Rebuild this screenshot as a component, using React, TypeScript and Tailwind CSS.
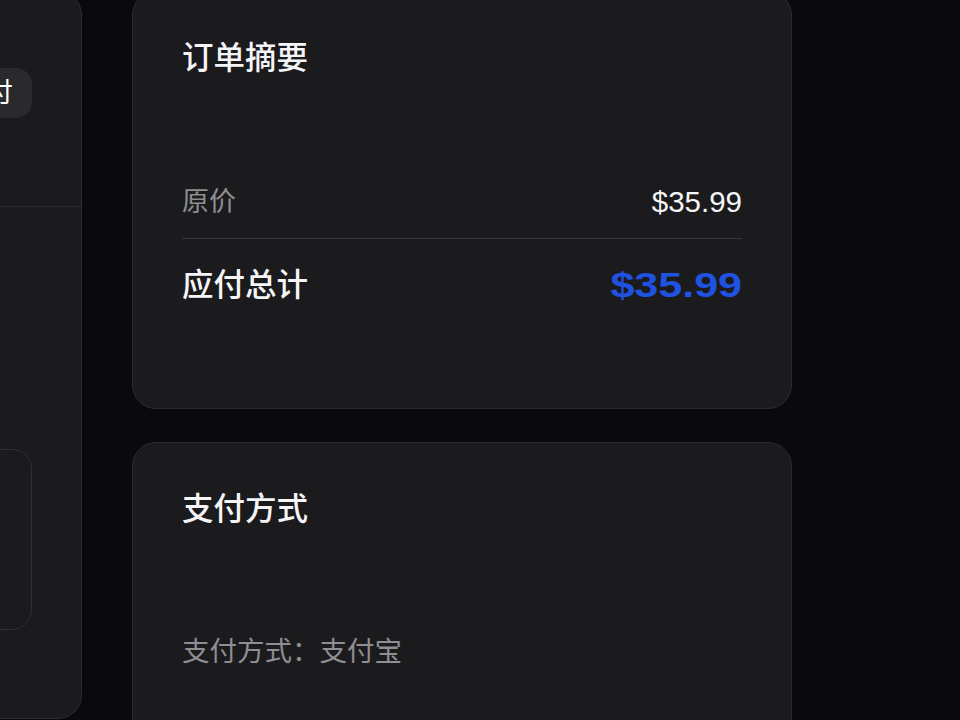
import React from "react";

const cjk = { fontFamily: '"Liberation Sans", "Noto Sans CJK SC", sans-serif' };

export default function App() {
  return (
    <div
      className="w-[960px] h-[720px] overflow-hidden bg-[#0a0a0c] text-[#f5f5f7]"
      style={cjk}
    >
      <div className="flex items-start gap-[50px] -mt-[9px] -ml-[218px]">
        {/* Left card (mostly off-screen) */}
        <div className="w-[300px] shrink-0 rounded-[24px] border border-[#2c2c30] bg-[#1b1b1e]">
          <div className="flex items-center justify-between border-b border-[#2c2c30] pl-[49px] pr-[49px] pt-[76px] pb-[88px]">
            <span className="text-[31px] font-medium leading-[34px]">订单</span>
            <span className="flex h-[50px] items-center rounded-[16px] bg-[#2a2a2d] px-[19px] text-[27px] leading-[30px] text-white">
              已支付
            </span>
          </div>
          <div className="px-[49px] pt-[242px] pb-[88px]">
            <div className="h-[181px] rounded-[20px] border border-[#303034]" />
          </div>
        </div>

        {/* Right column */}
        <div className="flex w-[660px] shrink-0 flex-col gap-[33px]">
          <div className="rounded-[24px] border border-[#2c2c30] bg-[#1b1b1e] px-[49px] pt-[49px] pb-[103px]">
            <h2 className="text-[31.5px] font-medium leading-[34px] text-[#f5f5f7]">订单摘要</h2>
            <div className="mt-[112px] flex items-center justify-between border-b border-[#38383c] pb-[21px]">
              <span className="text-[27px] leading-[30px] text-[#8e8e93]">原价</span>
              <span className="text-[29.5px] leading-[30px] text-[#f5f5f7]">$35.99</span>
            </div>
            <div className="flex items-center justify-between pt-[26px]">
              <span className="text-[31.5px] font-medium leading-[40px] text-[#f5f5f7]">应付总计</span>
              <span className="inline-block origin-right scale-x-[1.23] text-[35px] font-bold leading-[40px] text-[#1f52e0]">
                $35.99
              </span>
            </div>
          </div>

          <div className="rounded-[24px] border border-[#2c2c30] bg-[#1b1b1e] px-[49px] pt-[49px] pb-[100px]">
            <h2 className="text-[31.5px] font-medium leading-[34px] text-[#f5f5f7]">支付方式</h2>
            <p className="mt-[111px] text-[27.5px] leading-[30px] text-[#8e8e93]">支付方式：支付宝</p>
          </div>
        </div>
      </div>
    </div>
  );
}
